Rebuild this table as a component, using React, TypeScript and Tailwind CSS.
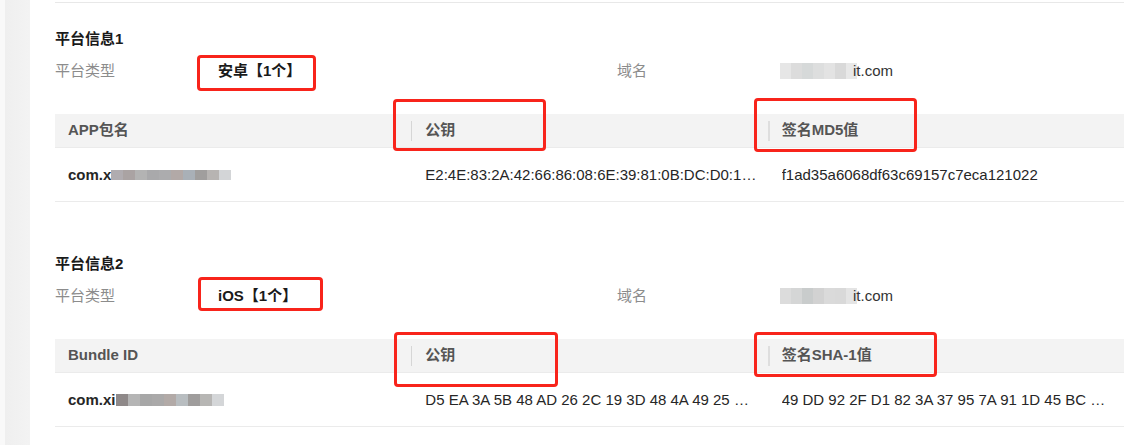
import React from "react";

const RED = "border-[3px] border-[#f8241b] rounded-[4px]";

function Blocks({ colors, h, w }: { colors: string[]; h: number; w: number }) {
  return (
    <span className="inline-flex items-center align-middle">
      {colors.map((c, i) => (
        <span key={i} style={{ background: c, width: w, height: h, display: "inline-block" }} />
      ))}
    </span>
  );
}

function InfoRow({ value, domainBlur }: { value: string; domainBlur: string[] }) {
  return (
    <div className="flex h-[20px] items-center leading-[20px]">
      <div className="w-[163px] text-[#8c8c8c]">平台类型</div>
      <div className="w-[399px] font-bold text-[#1a1a1a]">{value}</div>
      <div className="w-[163px] text-[#8c8c8c]">域名</div>
      <div className="flex items-center text-[#333]">
        <Blocks colors={domainBlur} h={16} w={11} />
        <span className="-ml-[4px]">it.com</span>
      </div>
    </div>
  );
}

function Table({
  h: [h1, h2, h3],
  name,
  nameBlur,
  blurH,
  key2,
  key3,
  tight,
}: {
  h: string[];
  name: string;
  nameBlur: string[];
  blurH: number;
  key2: string;
  key3: string;
  tight: boolean;
}) {
  return (
    <div>
      <div className="grid h-[34px] grid-cols-3 border-b border-[#ebebeb] bg-[#f3f3f3] font-bold text-[#555]">
        <div className="flex items-center pl-[13px]">{h1}</div>
        <div className="flex items-center">
          <span className="h-[20px] w-px bg-[#d6d6d6]" />
          <span className="pl-[13px]">{h2}</span>
        </div>
        <div className="flex items-center">
          <span className="h-[20px] w-[2px] bg-[#dedede]" />
          <span className="pl-[12px]">{h3}</span>
        </div>
      </div>
      <div className="grid h-[54px] grid-cols-3 border-b border-[#ebebeb] pt-[1px] text-[#262626]">
        <div className="flex items-center pl-[13px] font-bold">
          <span>{name}</span>
          <Blocks colors={nameBlur} h={blurH} w={12} />
        </div>
        <div className={`flex min-w-0 items-center pl-[14px] ${tight ? "pr-[8px]" : "pr-[14px]"}`}>
          <span className="truncate">{key2}</span>
        </div>
        <div className="flex min-w-0 items-center pl-[14px] pr-[14px]">
          <span className="truncate">{key3}</span>
        </div>
      </div>
    </div>
  );
}

export default function App() {
  return (
    <div
      className="relative flex h-[445px] w-[1135px] overflow-hidden bg-white text-[15px]"
      style={{ fontFamily: '"Liberation Sans", "Noto Sans CJK SC", sans-serif' }}
    >
      <div className="flex w-[30px] shrink-0">
        <div className="w-[5px] bg-[#f9f9f9]" />
        <div className="flex-1 bg-gradient-to-r from-[#efefef] to-[#f3f3f3]" />
      </div>
      <div className="w-[1094px] pl-[25px] pt-[2px]">
        <div className="h-px bg-[#e8e8e8]" />

        <div className="mt-[26px] h-[20px] font-bold leading-[20px] text-[#1a1a1a]">平台信息1</div>
        <div className="mt-[12px]">
          <InfoRow
            value="安卓【1个】"
            domainBlur={["#e6e6e6", "#dcdcdc", "#d6d9d9", "#dddede", "#e3e3e3", "#d9d9d9", "#e8e8e8"]}
          />
        </div>
        <div className="mt-[33px]">
          <Table
            h={["APP包名", "公钥", "签名MD5值"]}
            name="com.x"
            nameBlur={["#b0acb0", "#aaa3a3", "#b3b3b3", "#a9a9ab", "#acacae", "#b2a9a7", "#a9b0b7", "#a09e9d", "#b7b4b2", "#d3d5d7"]}
            blurH={10}
            key2="E2:4E:83:2A:42:66:86:08:6E:39:81:0B:DC:D0:1F:9A:3C:77:21:5E"
            key3="f1ad35a6068df63c69157c7eca121022"
            tight={true}
          />
        </div>

        <div className="mt-[52px] h-[20px] font-bold leading-[20px] text-[#1a1a1a]">平台信息2</div>
        <div className="mt-[12px]">
          <InfoRow
            value="iOS【1个】"
            domainBlur={["#dcdcdc", "#d5d6d6", "#c9cccc", "#d2d2d2", "#dadada", "#d9d9d9", "#e4e4e4"]}
          />
        </div>
        <div className="mt-[33px]">
          <Table
            h={["Bundle ID", "公钥", "签名SHA-1值"]}
            name="com.xi"
            nameBlur={["#8f8989", "#b5b5b5", "#a7a7a7", "#aaa9a9", "#b2aaa7", "#b8bdc0", "#9f9d9c", "#b7b6b4", "#d4d6d8"]}
            blurH={12}
            key2="D5 EA 3A 5B 48 AD 26 2C 19 3D 48 4A 49 25 7C 1E 9F 0A"
            key3="49 DD 92 2F D1 82 3A 37 95 7A 91 1D 45 BC 6E 02 8A 3F"
            tight={false}
          />
        </div>
      </div>

      {/* annotation boxes */}
      <div className={`absolute left-[197px] top-[55px] h-[36px] w-[119px] ${RED}`} />
      <div className={`absolute left-[393px] top-[99px] h-[52px] w-[153px] ${RED}`} />
      <div className={`absolute left-[754px] top-[98px] h-[54px] w-[163px] ${RED}`} />
      <div className={`absolute left-[198px] top-[277px] h-[34px] w-[125px] ${RED}`} />
      <div className={`absolute left-[394px] top-[332px] h-[55px] w-[164px] ${RED}`} />
      <div className={`absolute left-[754px] top-[332px] h-[45px] w-[183px] ${RED}`} />
    </div>
  );
}
